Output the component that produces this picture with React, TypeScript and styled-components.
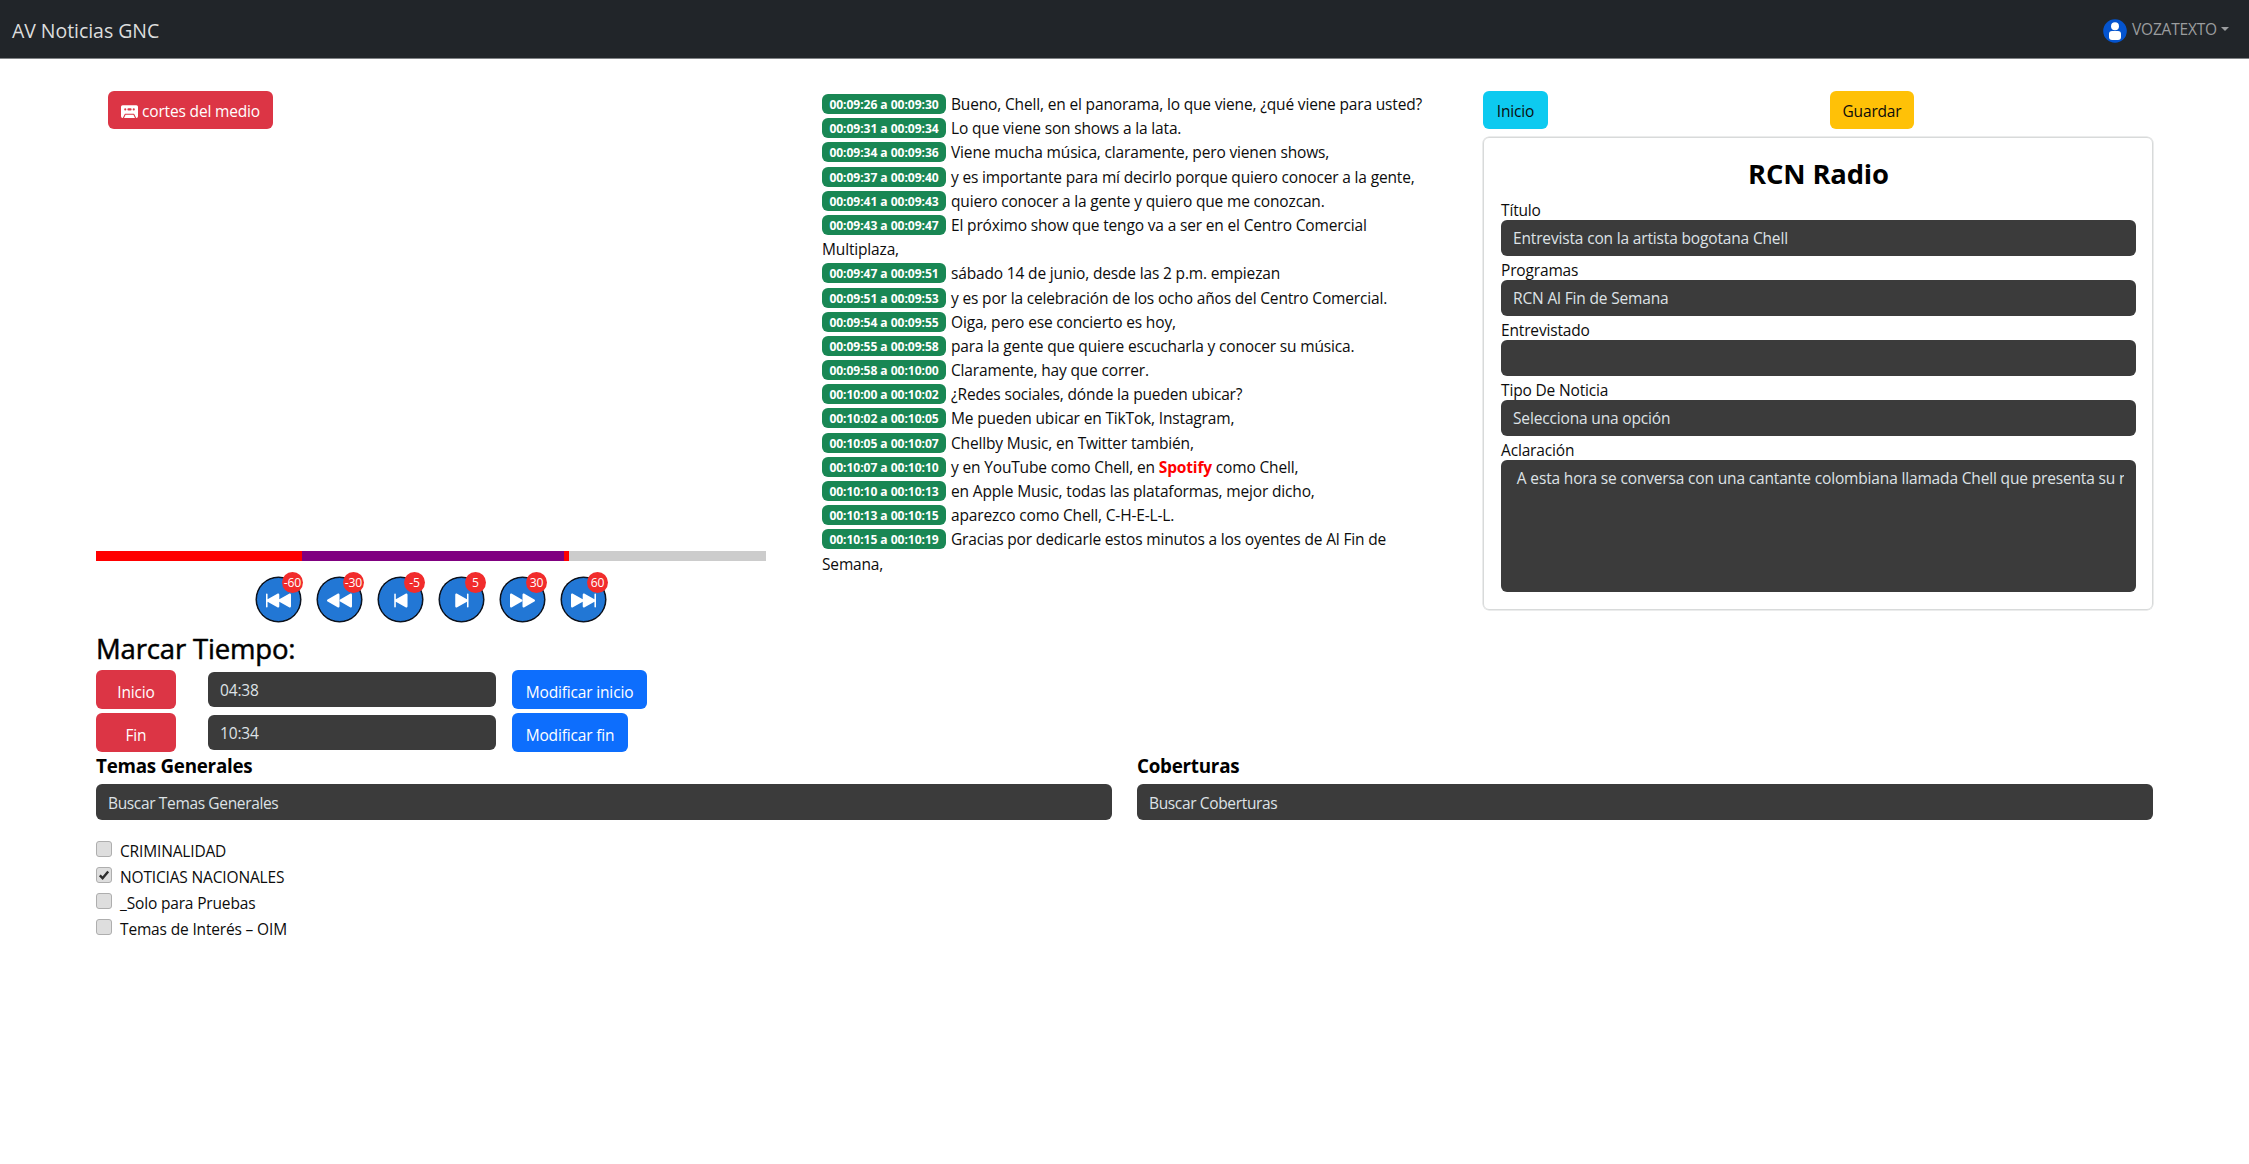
import React from "react";
import styled, { createGlobalStyle, css } from "styled-components";
import {
  BsCassetteFill,
  BsSkipBackwardFill,
  BsRewindFill,
  BsSkipStartFill,
  BsSkipEndFill,
  BsFastForwardFill,
  BsSkipForwardFill,
} from "react-icons/bs";

const GlobalStyle = createGlobalStyle`
  *, *::before, *::after { box-sizing: border-box; }
  body {
    margin: 0;
    background: #fff;
    color: #0c0c0c;
    font-family: "Segoe UI", "Open Sans", "Noto Sans", sans-serif;
    font-size: 15.5px;
    letter-spacing: -0.16px;
    line-height: 24px;
    overflow: hidden;
  }
  button, input, textarea { font: inherit; letter-spacing: inherit; }
`;

const Navbar = styled.header`
  display: flex;
  justify-content: space-between;
  height: 59px;
  padding: 0 20px 0 12px;
  background: #212529;
  border-bottom: 1px solid #808385;
`;

const Brand = styled.div`
  padding-top: 16px;
  font-size: 19.5px;
  line-height: 30px;
  letter-spacing: -0.05px;
  color: #dcdddd;
  white-space: nowrap;
`;

const UserMenu = styled.div`
  display: flex;
  height: 24px;
  margin-top: 19px;
  color: #9b9d9f;
`;

const UserName = styled.span`
  width: 86px;
  margin: -2px 3px 0 5px;
  line-height: 24px;
  letter-spacing: -0.2px;
`;

const Caret = styled.span`
  width: 0;
  height: 0;
  margin-top: 8px;
  border: 4px solid transparent;
  border-top-color: #9b9d9f;
  border-bottom: 0;
`;

const Main = styled.main`
  padding: 32px 96px 0;
`;

const Columns = styled.div`
  display: grid;
  grid-template-columns: 670px 605px 670px;
  justify-content: space-between;
  height: 666px;
`;

const Column = styled.section`
  display: flex;
  flex-direction: column;
`;

type Tone = "red" | "blue" | "cyan" | "yellow";
const tones = {
  red: css`background: #dc3545; color: #fff;`,
  blue: css`background: #0d6efd; color: #fff;`,
  cyan: css`background: #0dcaf0; color: #0c0c0c;`,
  yellow: css`background: #ffc107; color: #0c0c0c;`,
};

const Button = styled.button<{ $tone: Tone; $width: number; $height?: number }>`
  display: flex;
  align-items: center;
  justify-content: center;
  gap: 4px;
  width: ${(p) => p.$width}px;
  height: ${(p) => p.$height ?? 38}px;
  padding: ${(p) => (p.$height ? 4 : 2)}px 0 0;
  border: 0;
  border-radius: 6px;
  white-space: nowrap;
  ${(p) => tones[p.$tone]}
  svg { margin-top: 1px; }
`;

const MediaArea = styled.div`
  height: 460px;
  padding-left: 12px;
`;

const Track = styled.div`
  display: flex;
  height: 10px;
  background: #ccc;
`;

const Segment = styled.div<{ $color: string }>`
  background: ${(p) => p.$color};
`;

const Controls = styled.div`
  display: flex;
  gap: 16px;
  height: 45px;
  margin: 16px 0 0 160px;
`;

const Skip = styled.button`
  position: relative;
  display: flex;
  align-items: center;
  justify-content: center;
  width: 45px;
  height: 45px;
  padding: 1px 0 0;
  border: 1px solid #0b0f18;
  border-radius: 50%;
  background: #2277d5;
  color: #fff;
  box-shadow: 0 0 0 0.5px #0b0f18;
`;

const SkipBadge = styled.span`
  position: absolute;
  top: -6px;
  right: -3px;
  width: 21px;
  height: 21px;
  border-radius: 50%;
  background: #f12c2c;
  font-size: 12.2px;
  line-height: 21px;
  text-align: center;
`;

const MarkTitle = styled.h3`
  height: 48px;
  margin: 0;
  padding-top: 10px;
  font-size: 27.5px;
  font-weight: 500;
  line-height: 34px;
  color: #000;
  -webkit-text-stroke: 0.5px #000;
`;

const MarkRow = styled.div`
  display: grid;
  grid-template-columns: 112px 304px auto;
  align-items: center;
  height: 43px;
  padding-bottom: 4px;
`;

const Field = styled.input<{ $width?: string; $height?: number }>`
  display: block;
  width: ${(p) => p.$width ?? "100%"};
  height: ${(p) => p.$height ?? 36}px;
  padding: ${(p) => (p.$height ? 1 : 0)}px 12px 0;
  border: 0;
  border-radius: 6px;
  outline: 0;
  background: #3b3b3b;
  color: #dee2e6;
  &::placeholder { color: #dee2e6; opacity: 1; letter-spacing: -0.35px; }
`;

const Transcript = styled.div`
  padding-top: 1px;
  line-height: 24.18px;
`;

const Line = styled.div``;

const Stamp = styled.span`
  display: inline-block;
  width: 124px;
  height: 20px;
  margin: 2px 5px 0 0;
  border-radius: 6px;
  background: #198754;
  color: #fff;
  font-size: 12.1px;
  font-weight: 700;
  line-height: 21px;
  text-align: center;
  letter-spacing: -0.06px;
  vertical-align: top;
`;

const Keyword = styled.strong`
  color: #f00;
`;

const ButtonPair = styled.div`
  display: grid;
  grid-template-columns: 347px auto;
  height: 46px;
`;

const Card = styled.div`
  height: 473px;
  padding: 15px 16px 0 17px;
  border: 1px solid #d8dada;
  border-radius: 6px;
  box-shadow: 0 0 0 0.5px #d8dada;
`;

const CardTitle = styled.h3`
  height: 44px;
  margin: 0;
  padding-top: 4px;
  font-size: 27.4px;
  font-weight: 700;
  line-height: 34px;
  text-align: center;
  color: #000;
`;

const FormRow = styled.label`
  display: flex;
  flex-direction: column;
  height: 60px;
  white-space: nowrap;
`;

const Caption = styled.span`
  height: 23px;
  padding-top: 1px;
  line-height: 24px;
`;

const Note = styled.textarea`
  display: block;
  width: 100%;
  height: 132px;
  flex: none;
  padding: 6px 0;
  border: 0 solid #3b3b3b;
  border-width: 0 12px;
  border-radius: 6px;
  outline: 0;
  resize: none;
  overflow: hidden;
  white-space: pre;
  background: #3b3b3b;
  color: #dee2e6;
`;

const Topics = styled.div`
  display: grid;
  grid-template-columns: 1016px 1016px;
  justify-content: space-between;
`;

const TopicTitle = styled.h5`
  height: 27px;
  margin: 0;
  padding-top: 1px;
  font-size: 18.8px;
  font-weight: 700;
  line-height: 17px;
  letter-spacing: -0.25px;
  color: #000;
`;

const CheckList = styled.div`
  display: flex;
  flex-direction: column;
  margin-top: 18px;
`;

const CheckRow = styled.label`
  display: flex;
  gap: 8px;
  height: 26px;
  line-height: 27px;
`;

const Box = styled.span`
  display: flex;
  align-items: center;
  justify-content: center;
  width: 16px;
  height: 16px;
  margin-top: 3px;
  border: 1px solid #aeaeae;
  border-radius: 3px;
  background: #dedede;
`;

const skips = [
  { label: "-60", Icon: BsSkipBackwardFill },
  { label: "-30", Icon: BsRewindFill },
  { label: "-5", Icon: BsSkipStartFill },
  { label: "5", Icon: BsSkipEndFill },
  { label: "30", Icon: BsFastForwardFill },
  { label: "60", Icon: BsSkipForwardFill },
];

const lines: [string, React.ReactNode][] = [
  ["00:09:26 a 00:09:30", "Bueno, Chell, en el panorama, lo que viene, ¿qué viene para usted?"],
  ["00:09:31 a 00:09:34", "Lo que viene son shows a la lata."],
  ["00:09:34 a 00:09:36", "Viene mucha música, claramente, pero vienen shows,"],
  ["00:09:37 a 00:09:40", "y es importante para mí decirlo porque quiero conocer a la gente,"],
  ["00:09:41 a 00:09:43", "quiero conocer a la gente y quiero que me conozcan."],
  ["00:09:43 a 00:09:47", "El próximo show que tengo va a ser en el Centro Comercial Multiplaza,"],
  ["00:09:47 a 00:09:51", "sábado 14 de junio, desde las 2 p.m. empiezan"],
  ["00:09:51 a 00:09:53", "y es por la celebración de los ocho años del Centro Comercial."],
  ["00:09:54 a 00:09:55", "Oiga, pero ese concierto es hoy,"],
  ["00:09:55 a 00:09:58", "para la gente que quiere escucharla y conocer su música."],
  ["00:09:58 a 00:10:00", "Claramente, hay que correr."],
  ["00:10:00 a 00:10:02", "¿Redes sociales, dónde la pueden ubicar?"],
  ["00:10:02 a 00:10:05", "Me pueden ubicar en TikTok, Instagram,"],
  ["00:10:05 a 00:10:07", "Chellby Music, en Twitter también,"],
  ["00:10:07 a 00:10:10", <>y en YouTube como Chell, en <Keyword>Spotify</Keyword> como Chell,</>],
  ["00:10:10 a 00:10:13", "en Apple Music, todas las plataformas, mejor dicho,"],
  ["00:10:13 a 00:10:15", "aparezco como Chell, C-H-E-L-L."],
  ["00:10:15 a 00:10:19", "Gracias por dedicarle estos minutos a los oyentes de Al Fin de Semana,"],
];

const topics = [
  { name: "CRIMINALIDAD", checked: false },
  { name: "NOTICIAS NACIONALES", checked: true },
  { name: "_Solo para Pruebas", checked: false },
  { name: "Temas de Interés – OIM", checked: false },
];

const segments = [
  { color: "#ff0000", width: 206 },
  { color: "#800080", width: 262 },
  { color: "#ff0000", width: 5 },
];

export default function App() {
  return (
    <>
      <GlobalStyle />
      <Navbar>
        <Brand>AV Noticias GNC</Brand>
        <UserMenu>
          <svg width="24" height="24" viewBox="0 0 24 24">
            <circle cx="12" cy="12" r="11.8" fill="#0454cf" />
            <circle cx="12" cy="7.2" r="4" fill="#fff" />
            <rect x="6" y="12" width="12" height="9" rx="3" fill="#fff" />
          </svg>
          <UserName>VOZATEXTO</UserName>
          <Caret />
        </UserMenu>
      </Navbar>
      <Main>
        <Columns>
          <Column>
            <MediaArea>
              <Button $tone="red" $width={165}>
                <BsCassetteFill size={17} />
                cortes del medio
              </Button>
            </MediaArea>
            <Track>
              {segments.map((s, i) => (
                <Segment key={i} $color={s.color} style={{ width: s.width }} />
              ))}
            </Track>
            <Controls>
              {skips.map(({ label, Icon }) => (
                <Skip key={label}>
                  <Icon size={25} />
                  <SkipBadge>{label}</SkipBadge>
                </Skip>
              ))}
            </Controls>
            <MarkTitle>Marcar Tiempo:</MarkTitle>
            <MarkRow>
              <Button $tone="red" $width={80} $height={39}>Inicio</Button>
              <Field $width="288px" $height={35} defaultValue="04:38" />
              <Button $tone="blue" $width={135} $height={39}>Modificar inicio</Button>
            </MarkRow>
            <MarkRow>
              <Button $tone="red" $width={80} $height={39}>Fin</Button>
              <Field $width="288px" $height={35} defaultValue="10:34" />
              <Button $tone="blue" $width={116} $height={39}>Modificar fin</Button>
            </MarkRow>
          </Column>
          <Transcript>
            {lines.map(([time, text]) => (
              <Line key={time}>
                <Stamp>{time}</Stamp>
                {text}
              </Line>
            ))}
          </Transcript>
          <Column>
            <ButtonPair>
              <Button $tone="cyan" $width={65}>Inicio</Button>
              <Button $tone="yellow" $width={84}>Guardar</Button>
            </ButtonPair>
            <Card>
              <CardTitle>RCN Radio</CardTitle>
              <FormRow>
                <Caption>Título</Caption>
                <Field defaultValue="Entrevista con la artista bogotana Chell" />
              </FormRow>
              <FormRow>
                <Caption>Programas</Caption>
                <Field defaultValue="RCN Al Fin de Semana" />
              </FormRow>
              <FormRow>
                <Caption>Entrevistado</Caption>
                <Field />
              </FormRow>
              <FormRow>
                <Caption>Tipo De Noticia</Caption>
                <Field defaultValue="Selecciona una opción" />
              </FormRow>
              <FormRow>
                <Caption>Aclaración</Caption>
                <Note defaultValue=" A esta hora se conversa con una cantante colombiana llamada Chell que presenta su nuevo" />
              </FormRow>
            </Card>
          </Column>
        </Columns>
        <Topics>
          <Column>
            <TopicTitle>Temas Generales</TopicTitle>
            <Field $height={36} placeholder="Buscar Temas Generales" />
            <CheckList>
              {topics.map((t) => (
                <CheckRow key={t.name}>
                  <Box>
                    {t.checked && (
                      <svg width="12" height="12" viewBox="0 0 12 12">
                        <path d="M1.8 6.4 4.6 9.2 10.2 2.4" fill="none" stroke="#2d2d2d" strokeWidth="2.4" />
                      </svg>
                    )}
                  </Box>
                  {t.name}
                </CheckRow>
              ))}
            </CheckList>
          </Column>
          <Column>
            <TopicTitle>Coberturas</TopicTitle>
            <Field $height={36} placeholder="Buscar Coberturas" />
          </Column>
        </Topics>
      </Main>
    </>
  );
}
